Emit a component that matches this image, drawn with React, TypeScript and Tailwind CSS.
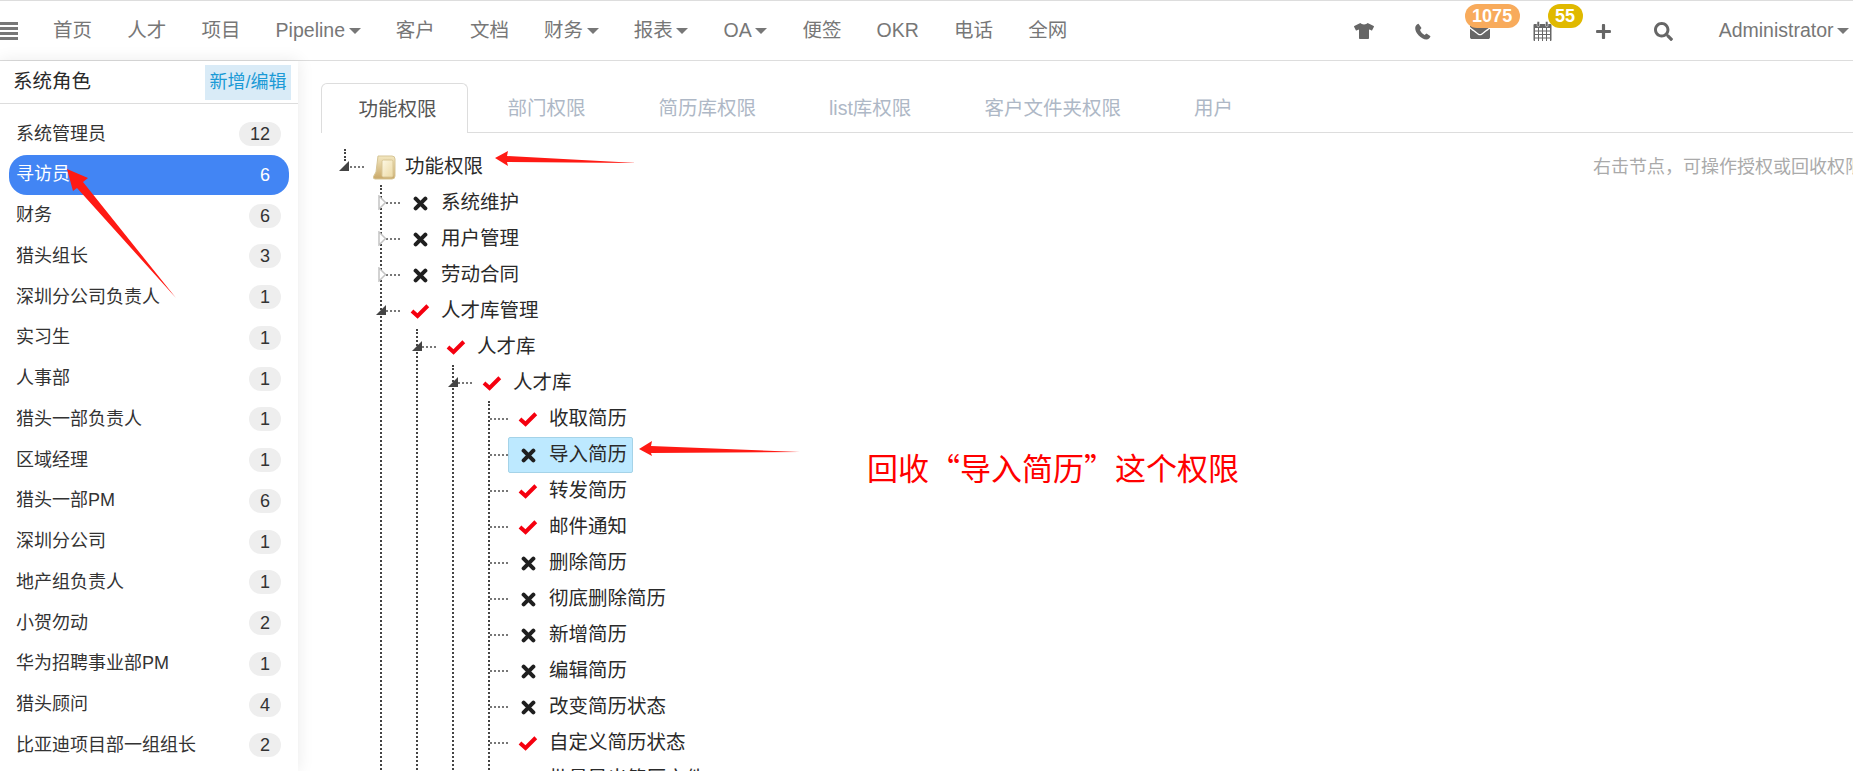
import type { ReactNode } from "react"
import { FaEnvelope, FaPlus, FaSearch, FaTshirt } from "react-icons/fa"

const FONT = "font-['Liberation_Sans','Noto_Sans_CJK_SC',sans-serif]"

const navItems = [
  { label: "首页" },
  { label: "人才" },
  { label: "项目" },
  { label: "Pipeline", caret: true },
  { label: "客户" },
  { label: "文档" },
  { label: "财务", caret: true },
  { label: "报表", caret: true },
  { label: "OA", caret: true },
  { label: "便签" },
  { label: "OKR" },
  { label: "电话" },
  { label: "全网" },
]

const roles = [
  { name: "系统管理员", count: 12 },
  { name: "寻访员", count: 6, active: true },
  { name: "财务", count: 6 },
  { name: "猎头组长", count: 3 },
  { name: "深圳分公司负责人", count: 1 },
  { name: "实习生", count: 1 },
  { name: "人事部", count: 1 },
  { name: "猎头一部负责人", count: 1 },
  { name: "区域经理", count: 1 },
  { name: "猎头一部PM", count: 6 },
  { name: "深圳分公司", count: 1 },
  { name: "地产组负责人", count: 1 },
  { name: "小贺勿动", count: 2 },
  { name: "华为招聘事业部PM", count: 1 },
  { name: "猎头顾问", count: 4 },
  { name: "比亚迪项目部一组组长", count: 2 },
]

const tabs = ["部门权限", "简历库权限", "list库权限", "客户文件夹权限", "用户"]

type TreeNode = {
  label: string
  on: boolean
  selected?: boolean
  collapsed?: boolean
  children?: TreeNode[]
}

const leaves: TreeNode[] = [
  { label: "收取简历", on: true },
  { label: "导入简历", on: false, selected: true },
  { label: "转发简历", on: true },
  { label: "邮件通知", on: true },
  { label: "删除简历", on: false },
  { label: "彻底删除简历", on: false },
  { label: "新增简历", on: false },
  { label: "编辑简历", on: false },
  { label: "改变简历状态", on: false },
  { label: "自定义简历状态", on: true },
  { label: "批量导出简历文件", on: false },
]

const tree: TreeNode[] = [
  { label: "系统维护", on: false, collapsed: true },
  { label: "用户管理", on: false, collapsed: true },
  { label: "劳动合同", on: false, collapsed: true },
  {
    label: "人才库管理",
    on: true,
    children: [{ label: "人才库", on: true, children: [{ label: "人才库", on: true, children: leaves }] }],
  },
]

function Caret() {
  return <span className="ml-[3.5px] inline-block border-x-[6px] border-t-[6px] border-x-transparent border-t-[#777]" />
}

function Folder() {
  return (
    <svg width="24" height="25" viewBox="0 0 24 25" className="shrink-0">
      <defs>
        <linearGradient id="back" x1="0" y1="0" x2="0" y2="1">
          <stop offset="0" stopColor="#f3e7c0" />
          <stop offset="1" stopColor="#c9a868" />
        </linearGradient>
        <linearGradient id="front" x1="0" y1="0" x2="1" y2="1">
          <stop offset="0" stopColor="#fdf8e4" />
          <stop offset="1" stopColor="#ecd9a4" />
        </linearGradient>
      </defs>
      <path d="M5 1h14q3 0 3 3v17q0 3-3 3H2q-2 0-1.500-2.500L3 17z" fill="url(#back)" stroke="#d6c596" />
      <rect x="9" y="5" width="11" height="17" rx="1.500" fill="url(#front)" stroke="#d9c796" />
    </svg>
  )
}

function Expander({ collapsed }: { collapsed?: boolean }) {
  if (collapsed) {
    return (
      <svg width="9" height="15" viewBox="0 0 9 15" className="absolute left-[-4px] top-[10px]">
        <path d="M1 1l6.500 6.500L1 14z" fill="#fff" stroke="#c4c4c4" strokeWidth="1.500" />
      </svg>
    )
  }
  return (
    <svg width="10" height="10" viewBox="0 0 10 10" className="absolute left-[-6px] top-[12px]">
      <path d="M10 0v10H0z" fill="#444" />
    </svg>
  )
}

function StateIcon({ on }: { on: boolean }) {
  if (on) {
    return (
      <svg width="20" height="16" viewBox="0 0 18 14" className="shrink-0">
        <path d="M1.800 7l5 4.500L16 2.300" fill="none" stroke="#f5000f" strokeWidth="3.600" />
      </svg>
    )
  }
  return (
    <svg width="15" height="15" viewBox="0 0 14 14" className="shrink-0">
      <path d="M2.500 2.500l9 9M11.500 2.500l-9 9" fill="none" stroke="#1f1f1f" strokeWidth="3.800" strokeLinecap="round" />
    </svg>
  )
}

function Branch({ node }: { node: TreeNode }) {
  const hasToggle = node.collapsed || node.children
  return (
    <div>
      <div className="relative flex h-[36px] items-center">
        <span className="w-[18px] shrink-0 border-t-2 border-dotted border-[#777]" />
        {hasToggle && <Expander collapsed={node.collapsed} />}
        <div
          className={
            node.selected
              ? "flex h-[36px] items-center rounded-[2px] border border-[#a5d3e8] bg-[#bde9ff] pl-[11px] pr-[5px]"
              : "flex h-[36px] items-center border border-transparent pl-[11px] pr-[5px]"
          }
        >
          <span className="flex w-[16px] shrink-0 justify-center">
            <StateIcon on={node.on} />
          </span>
          <span className="ml-[13px] whitespace-nowrap text-[19.5px] text-[#2a2a2a]">{node.label}</span>
        </div>
      </div>
      {node.children && (
        <div className="ml-[34px] border-l-2 border-dotted border-[#444]">
          {node.children.map((child) => (
            <Branch key={child.label} node={child} />
          ))}
        </div>
      )}
    </div>
  )
}

function IconBox({ className, children }: { className: string; children: ReactNode }) {
  return <div className={"relative flex h-[20px] w-[20px] shrink-0 items-center justify-center " + className}>{children}</div>
}

function Badge({ className, children }: { className: string; children: ReactNode }) {
  return (
    <span className={"absolute top-[-17px] h-[24px] rounded-full text-center text-[18px] font-bold leading-[24px] text-white " + className}>
      {children}
    </span>
  )
}

function PhoneIcon() {
  return (
    <svg width="17" height="17" viewBox="0 0 17 17">
      <path
        d="M4.500 0.800C2.800 1.300 1.200 3 1.200 5c0 5 5.800 11.300 11.300 11.500 2 0 3.400-1.500 4-3.300l-4-2.700-1.900 1.500C8.600 11 6.800 9 6 7l1.500-2z"
        fill="#666"
      />
    </svg>
  )
}

function CalendarIcon() {
  const cells = [7, 10.5, 14, 17.5]
  const cols = [2, 6, 10, 14]
  return (
    <svg width="19" height="20" viewBox="0 0 19 20">
      <rect x="0.500" y="3" width="18" height="17" rx="1" fill="#666" />
      <rect x="4" y="0.500" width="2.500" height="5" rx="1" fill="#666" stroke="#fff" strokeWidth="0.500" />
      <rect x="12.500" y="0.500" width="2.500" height="5" rx="1" fill="#666" stroke="#fff" strokeWidth="0.500" />
      {cells.map((y) => cols.map((x) => <rect key={x + "-" + y} x={x} y={y} width="3" height="2.500" fill="#fff" />))}
    </svg>
  )
}

function Arrow({ points }: { points: string }) {
  return <polygon points={points} fill="#ff1a14" />
}

export default function App() {
  return (
    <div className={"relative h-[771px] w-[1853px] overflow-hidden bg-white " + FONT}>
      <header className="flex h-[61px] items-center border-y border-[#ddd] pr-[4px] pt-[1px] text-[#777]">
        <div className="mr-[35px] flex w-[18px] flex-col gap-[2px]">
          <span className="h-[3px] bg-[#777]" />
          <span className="h-[3px] bg-[#777]" />
          <span className="h-[3px] bg-[#777]" />
          <span className="h-[3px] bg-[#777]" />
        </div>
        <nav className="flex items-center gap-[35.2px] text-[19.5px]">
          {navItems.map((item) => (
            <span key={item.label} className="flex items-center whitespace-nowrap">
              {item.label}
              {item.caret && <Caret />}
            </span>
          ))}
        </nav>
        <div className="ml-auto flex items-center">
          <IconBox className="">
            <FaTshirt className="text-[20px] text-[#666]" />
          </IconBox>
          <IconBox className="ml-[39px]">
            <PhoneIcon />
          </IconBox>
          <IconBox className="ml-[37px]">
            <FaEnvelope className="text-[21px] text-[#666]" />
            <Badge className="left-[-5px] w-[55px] bg-[#f8ab5c]">1075</Badge>
          </IconBox>
          <IconBox className="ml-[43px]">
            <CalendarIcon />
            <Badge className="left-[15px] w-[35px] bg-[#e0b900]">55</Badge>
          </IconBox>
          <IconBox className="ml-[41px]">
            <FaPlus className="text-[17px] text-[#666]" />
          </IconBox>
          <IconBox className="ml-[40px]">
            <FaSearch className="text-[19px] text-[#666]" />
          </IconBox>
          <span className="ml-[45px] flex items-center text-[19.5px]">
            Administrator
            <Caret />
          </span>
        </div>
      </header>

      <div className="flex h-[710px]">
        <aside className="w-[298px] shrink-0 shadow-[0_0_16px_rgba(0,0,0,0.09)]">
          <div className="flex h-[43px] items-center justify-between border-b border-[#ddd] pl-[13px] pr-[7px]">
            <span className="text-[19.5px] text-[#2a2a2a]">系统角色</span>
            <span className="flex h-[35px] w-[86px] items-center justify-center bg-[#d9ebf7] text-[18px] text-[#1b9ad6]">新增/编辑</span>
          </div>
          <ul className="mx-[9px] pt-[10px]">
            {roles.map((role) => (
              <li
                key={role.name}
                className={
                  role.active
                    ? "mb-[0.75px] flex h-[40px] items-center justify-between rounded-[18px] bg-[#4285f4] pl-[7px] pr-[8px] text-white"
                    : "mb-[0.75px] flex h-[40px] items-center justify-between pl-[7px] pr-[8px] text-[#333]"
                }
              >
                <span className="whitespace-nowrap text-[18px]">{role.name}</span>
                <span
                  className={
                    role.active
                      ? "h-[24px] min-w-[31px] rounded-full px-[11px] text-center text-[18px] leading-[24px]"
                      : "h-[24px] min-w-[31px] rounded-full bg-[#eee] px-[11px] text-center text-[18px] leading-[24px]"
                  }
                >
                  {role.count}
                </span>
              </li>
            ))}
          </ul>
        </aside>

        <main className="min-w-0 flex-1">
          <div className="ml-[23px] mt-[22px] flex h-[50px] items-end border-b border-[#ddd]">
            <div className="-mb-px flex h-[50px] w-[147px] items-center justify-center rounded-t-[6px] border border-b-0 border-[#ddd] bg-white pl-[6px] pt-[2px] text-[19.5px] text-[#555]">
              功能权限
            </div>
            <div className="ml-[3px] flex h-[49px] items-center pt-[2px]">
              {tabs.map((tab) => (
                <span key={tab} className="whitespace-nowrap px-[36.5px] text-[19.5px] text-[#aeb8c6]">
                  {tab}
                </span>
              ))}
            </div>
          </div>

          <div className="ml-[47px] mt-[16px]">
            <div className="relative flex h-[36px] items-center">
              <span className="absolute left-[-1px] top-0 h-[12px] border-l-2 border-dotted border-[#444]" />
              <span className="w-[19px] shrink-0 border-t-2 border-dotted border-[#777]" />
              <Expander />
              <span className="ml-[9px]">
                <Folder />
              </span>
              <span className="ml-[8px] whitespace-nowrap text-[19.5px] text-[#2a2a2a]">功能权限</span>
              <span className="ml-[1110px] shrink-0 whitespace-nowrap text-[18px] text-[#aaa]">右击节点，可操作授权或回收权限</span>
            </div>
            <div className="ml-[35px] border-l-2 border-dotted border-[#444]">
              {tree.map((node) => (
                <Branch key={node.label} node={node} />
              ))}
            </div>
          </div>
        </main>
      </div>

      {/* 截图上的红色标注 */}
      <svg width="1853" height="771" className="pointer-events-none absolute left-0 top-0">
        <Arrow points="67,169 88,178 83,182 176,298 77,188 73,191" />
        <Arrow points="495,158 508,151 507,156 637,163 507,162 508,166" />
        <Arrow points="639,449 652,441 651,446 800,452 651,453 652,456" />
      </svg>
      <span
        lang="zh-CN"
        className="absolute left-[867px] top-[448px] whitespace-nowrap font-['Noto_Sans_CJK_SC',sans-serif] text-[31px] leading-[38px] text-[#ff0000]"
      >
        回收“导入简历”这个权限
      </span>
    </div>
  )
}
